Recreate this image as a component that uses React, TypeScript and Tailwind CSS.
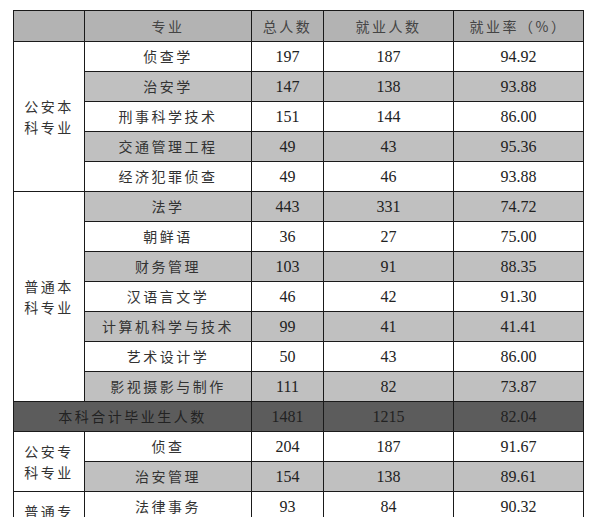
type Row = { name: string; total: string; employed: string; rate: string }
type Group = { label: string[]; rows: Row[] }

const groupsTop: Group[] = [
  {
    label: ['公安本', '科专业'],
    rows: [
      { name: '侦查学', total: '197', employed: '187', rate: '94.92' },
      { name: '治安学', total: '147', employed: '138', rate: '93.88' },
      { name: '刑事科学技术', total: '151', employed: '144', rate: '86.00' },
      { name: '交通管理工程', total: '49', employed: '43', rate: '95.36' },
      { name: '经济犯罪侦查', total: '49', employed: '46', rate: '93.88' },
    ],
  },
  {
    label: ['普通本', '科专业'],
    rows: [
      { name: '法学', total: '443', employed: '331', rate: '74.72' },
      { name: '朝鲜语', total: '36', employed: '27', rate: '75.00' },
      { name: '财务管理', total: '103', employed: '91', rate: '88.35' },
      { name: '汉语言文学', total: '46', employed: '42', rate: '91.30' },
      { name: '计算机科学与技术', total: '99', employed: '41', rate: '41.41' },
      { name: '艺术设计学', total: '50', employed: '43', rate: '86.00' },
      { name: '影视摄影与制作', total: '111', employed: '82', rate: '73.87' },
    ],
  },
]

const groupsBottom: Group[] = [
  {
    label: ['公安专', '科专业'],
    rows: [
      { name: '侦查', total: '204', employed: '187', rate: '91.67' },
      { name: '治安管理', total: '154', employed: '138', rate: '89.61' },
    ],
  },
  {
    label: ['普通专', '科专业'],
    rows: [
      { name: '法律事务', total: '93', employed: '84', rate: '90.32' },
      { name: '司法警务', total: '60', employed: '52', rate: '86.67' },
    ],
  },
]

const cjk = "font-['Noto_Sans_CJK_SC',sans-serif] text-[14px] tracking-[2.5px]"
const num = "font-['Liberation_Serif','Noto_Sans_CJK_SC',serif] text-[16px]"
const cell = 'border border-[#1a1a1a] h-[30px] p-0 text-center align-middle'

function GroupRows({ group, startShade }: { group: Group; startShade: boolean }) {
  return (
    <>
      {group.rows.map((row, i) => {
        const shaded = (i % 2 === 0) === startShade
        const bg = shaded ? 'bg-[#c0c0c0]' : 'bg-white'
        return (
          <tr key={row.name}>
            {i === 0 && (
              <td
                rowSpan={group.rows.length}
                className={`${cell} bg-white ${cjk} leading-[21px] text-[#333]`}
              >
                {group.label.map(l => (
                  <div key={l}>{l}</div>
                ))}
              </td>
            )}
            <td className={`${cell} ${bg} ${cjk} text-[#333]`}>{row.name}</td>
            <td className={`${cell} ${bg} ${num} text-[#222]`}>{row.total}</td>
            <td className={`${cell} ${bg} ${num} text-[#222]`}>{row.employed}</td>
            <td className={`${cell} ${bg} ${num} text-[#222]`}>{row.rate}</td>
          </tr>
        )
      })}
    </>
  )
}

export default function App() {
  return (
    <div className="w-[592px] h-[517px] overflow-hidden bg-white pt-[10px] pl-[13px]">
      <table className="border-collapse table-fixed w-[570px]">
        <colgroup>
          <col className="w-[71px]" />
          <col className="w-[167px]" />
          <col className="w-[72px]" />
          <col className="w-[130px]" />
          <col className="w-[130px]" />
        </colgroup>
        <thead>
          <tr className="bg-[#b3b3b3]">
            <th className={`${cell} h-[31px] font-normal`} />
            <th className={`${cell} h-[31px] font-normal ${cjk} text-[#444]`}>专业</th>
            <th className={`${cell} h-[31px] font-normal ${cjk} text-[#444]`}>总人数</th>
            <th className={`${cell} h-[31px] font-normal ${cjk} text-[#444]`}>就业人数</th>
            <th className={`${cell} h-[31px] font-normal ${cjk} text-[#444]`}>
              就业率（%）
            </th>
          </tr>
        </thead>
        <tbody>
          <GroupRows group={groupsTop[0]} startShade={false} />
          <GroupRows group={groupsTop[1]} startShade={true} />
          <tr className="bg-[#5c5c5c]">
            <td colSpan={2} className={`${cell} ${cjk} text-[#222]`}>
              本科合计毕业生人数
            </td>
            <td className={`${cell} ${num} text-[#222]`}>1481</td>
            <td className={`${cell} ${num} text-[#222]`}>1215</td>
            <td className={`${cell} ${num} text-[#222]`}>82.04</td>
          </tr>
          <GroupRows group={groupsBottom[0]} startShade={false} />
          <GroupRows group={groupsBottom[1]} startShade={false} />
        </tbody>
      </table>
    </div>
  )
}
